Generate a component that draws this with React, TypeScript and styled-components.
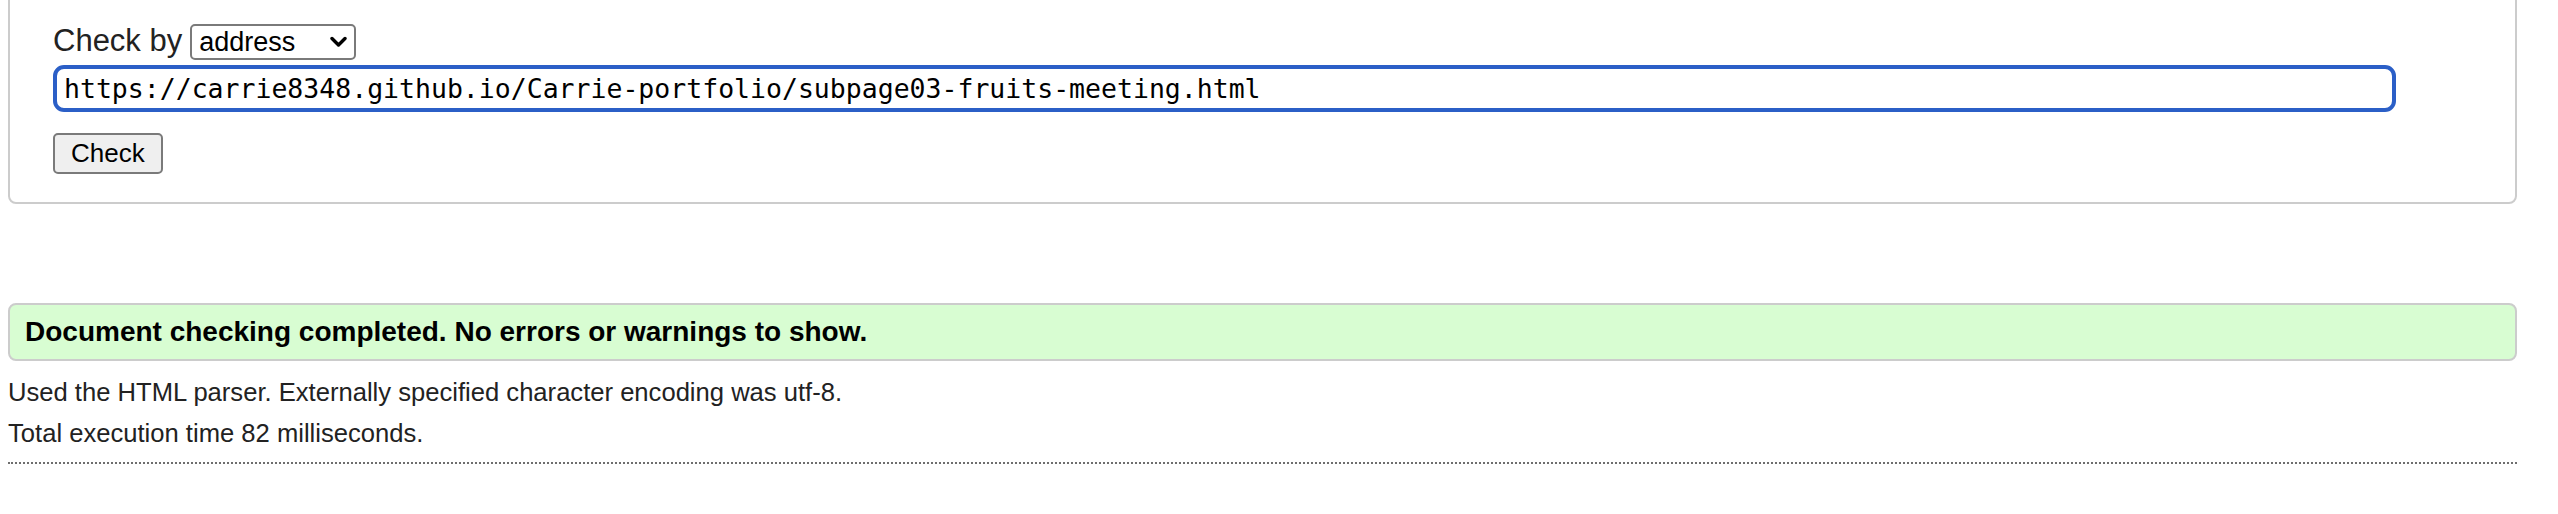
import React from "react";
import styled, { createGlobalStyle } from "styled-components";

const GlobalStyle = createGlobalStyle`
  html, body {
    margin: 0;
    padding: 0;
    background: #ffffff;
  }
  body {
    font-family: "Liberation Sans", Arial, Helvetica, sans-serif;
    color: #222222;
    font-size: 25.6px;
    overflow: hidden;
  }
`;

const Page = styled.div`
  display: flex;
  flex-direction: column;
  padding: 0 41px 0 8px;
`;

const Fieldset = styled.div`
  margin-top: -20px;
  border: 2px solid #cccccc;
  border-radius: 8px;
  padding: 41px 20px 28px 43px;
  display: flex;
  flex-direction: column;
`;

const CheckByRow = styled.div`
  display: flex;
  align-items: baseline;
  gap: 8px;
`;

const Label = styled.span`
  font-size: 31px;
  color: #222222;
`;

const SelectWrap = styled.div`
  position: relative;
  display: inline-flex;
`;

const Select = styled.select`
  appearance: none;
  -webkit-appearance: none;
  width: 166px;
  height: 36px;
  box-sizing: border-box;
  border: 2px solid #7a7a7a;
  border-radius: 5px;
  background: #ffffff;
  font-family: "Liberation Sans", Arial, sans-serif;
  font-size: 27px;
  color: #000000;
  padding: 0 30px 0 7px;
  outline: none;
`;

const Chevron = styled.svg`
  position: absolute;
  right: 9px;
  top: 12px;
  width: 17px;
  height: 12px;
  pointer-events: none;
`;

const UrlInput = styled.input`
  margin-top: 5px;
  width: 2343px;
  height: 47px;
  box-sizing: border-box;
  border: 4px solid #2b5fc7;
  border-radius: 11px;
  padding: 0 7px;
  font-family: "DejaVu Sans Mono", "Liberation Mono", monospace;
  font-size: 26.5px;
  color: #000000;
  outline: none;
  background: #ffffff;
`;

const ButtonRow = styled.div`
  display: flex;
  margin-top: 21px;
`;

const Button = styled.button`
  height: 41px;
  box-sizing: border-box;
  padding: 0 16px;
  border: 2px solid #7a7a7a;
  border-radius: 5px;
  background: #efefef;
  font-family: "Liberation Sans", Arial, sans-serif;
  font-size: 26px;
  color: #000000;
`;

const Success = styled.div`
  margin-top: 99px;
  height: 58px;
  box-sizing: border-box;
  border: 2px solid #cccccc;
  border-radius: 8px;
  background: #d8fdd2;
  display: flex;
  align-items: center;
  padding-left: 15px;
  font-weight: bold;
  font-size: 28px;
  color: #000000;
`;

const Details = styled.div`
  margin-top: 11px;
  display: flex;
  flex-direction: column;
`;

const Line = styled.p`
  margin: 0;
  line-height: 41px;
  font-size: 25.6px;
  color: #222222;
`;

const Dotted = styled.hr`
  margin: 8px 0 0 0;
  border: none;
  border-top: 2px dotted #6e6e6e;
  height: 0;
`;

export default function App() {
  return (
    <>
      <GlobalStyle />
      <Page>
        <Fieldset>
          <CheckByRow>
            <Label>Check by</Label>
            <SelectWrap>
              <Select defaultValue="address">
                <option value="address">address</option>
                <option value="file">file upload</option>
                <option value="text">text input</option>
              </Select>
              <Chevron viewBox="0 0 17 12">
                <path
                  d="M2 2.5 L8.5 9 L15 2.5"
                  fill="none"
                  stroke="#000"
                  strokeWidth="3.4"
                  strokeLinecap="round"
                  strokeLinejoin="round"
                />
              </Chevron>
            </SelectWrap>
          </CheckByRow>
          <UrlInput
            type="url"
            readOnly
            defaultValue="https://carrie8348.github.io/Carrie-portfolio/subpage03-fruits-meeting.html"
          />
          <ButtonRow>
            <Button type="button">Check</Button>
          </ButtonRow>
        </Fieldset>
        <Success>Document checking completed. No errors or warnings to show.</Success>
        <Details>
          <Line>Used the HTML parser. Externally specified character encoding was utf-8.</Line>
          <Line>Total execution time 82 milliseconds.</Line>
        </Details>
        <Dotted />
      </Page>
    </>
  );
}
